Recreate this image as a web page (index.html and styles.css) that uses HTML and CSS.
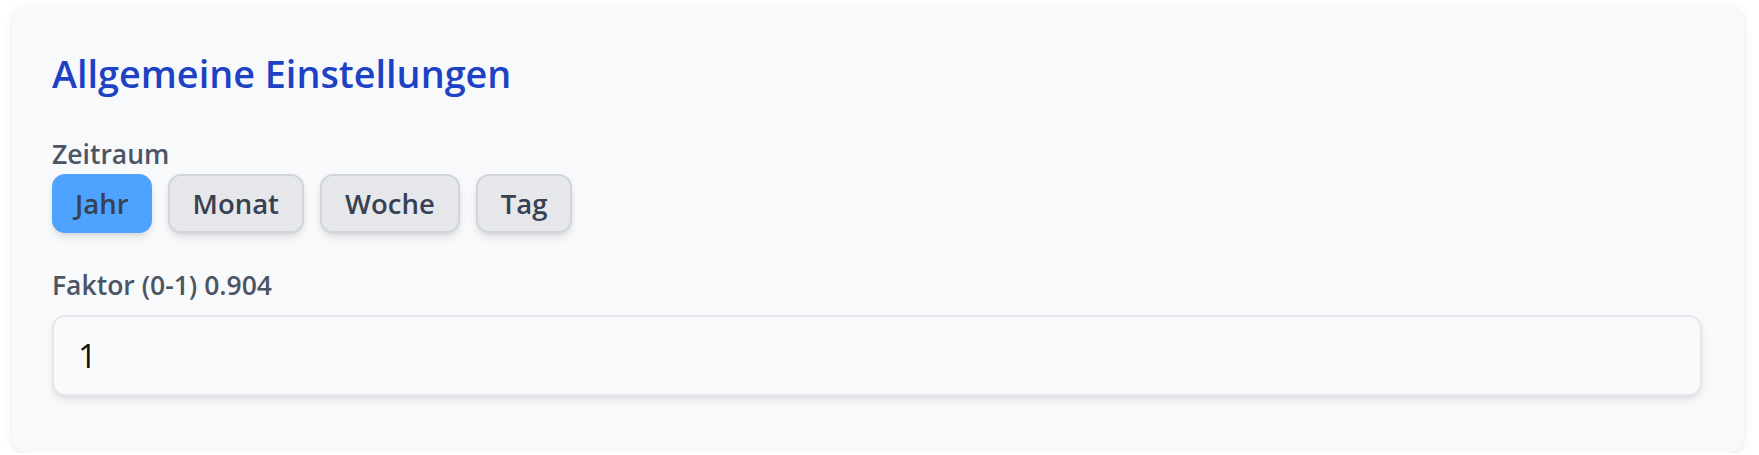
FILE: index.html
```html
<!DOCTYPE html>
<html lang="de">
<head>
<meta charset="utf-8">
<title>Allgemeine Einstellungen</title>
<link rel="stylesheet" href="styles.css">
</head>
<body>
  <section class="card">
    <h2 class="card-title">Allgemeine Einstellungen</h2>
    <div class="field">
      <label class="field-label">Zeitraum</label>
      <div class="segmented">
        <button class="seg-btn active" type="button">Jahr</button>
        <button class="seg-btn" type="button">Monat</button>
        <button class="seg-btn" type="button">Woche</button>
        <button class="seg-btn" type="button">Tag</button>
      </div>
    </div>
    <div class="field field-last">
      <label class="field-label" for="faktor">Faktor (0-1) 0.904</label>
      <input id="faktor" class="text-input" type="text" value="1">
    </div>
  </section>
</body>
</html>
```

FILE: styles.css
```css
* {
  box-sizing: border-box;
}

html, body {
  margin: 0;
  padding: 0;
  background: #ffffff;
}

body {
  font-family: "Open Sans", "Noto Sans", sans-serif;
  padding: 6px 15px 0 12px;
}

.card {
  background: #f8f9fb;
  border-radius: 16px;
  padding: 45px 42px 40px 40px;
  box-shadow: 0 2px 10px rgba(0, 0, 0, 0.08), 0 1px 3px rgba(0, 0, 0, 0.04);
}

.card-title {
  margin: 0 0 39px 0;
  font-size: 37.8px;
  line-height: 46px;
  font-weight: 600;
  color: #1d42c3;
}

.field {
  display: flex;
  flex-direction: column;
  margin-bottom: 34px;
}

.field-last {
  margin-bottom: 17px;
}

.field-label {
  font-size: 26.5px;
  line-height: 36px;
  font-weight: 600;
  color: #4b5563;
  margin-bottom: 2px;
}

.field-last .field-label {
  margin-bottom: 12px;
}

.segmented {
  display: flex;
  gap: 16px;
}

.seg-btn {
  font-family: inherit;
  font-size: 27.5px;
  line-height: 35px;
  font-weight: 600;
  color: #374151;
  background: #e5e7eb;
  border: 2px solid #d1d5db;
  border-radius: 13px;
  padding: 10px 23px;
  box-shadow: 0 5px 8px -1px rgba(0, 0, 0, 0.1), 0 2px 5px -2px rgba(0, 0, 0, 0.1);
  cursor: pointer;
}

.seg-btn.active {
  background: #4da3fe;
  border-color: #4da3fe;
  padding: 10px 21px;
}

.text-input {
  display: block;
  width: 100%;
  font-family: inherit;
  font-size: 33px;
  line-height: 45px;
  font-weight: 400;
  color: #111111;
  background: #f9fafb;
  border: 2px solid #e4e6ea;
  border-radius: 13px;
  padding: 16px 24px;
  box-shadow: 0 5px 8px -1px rgba(0, 0, 0, 0.08), 0 2px 5px -2px rgba(0, 0, 0, 0.08);
  outline: none;
}
```
